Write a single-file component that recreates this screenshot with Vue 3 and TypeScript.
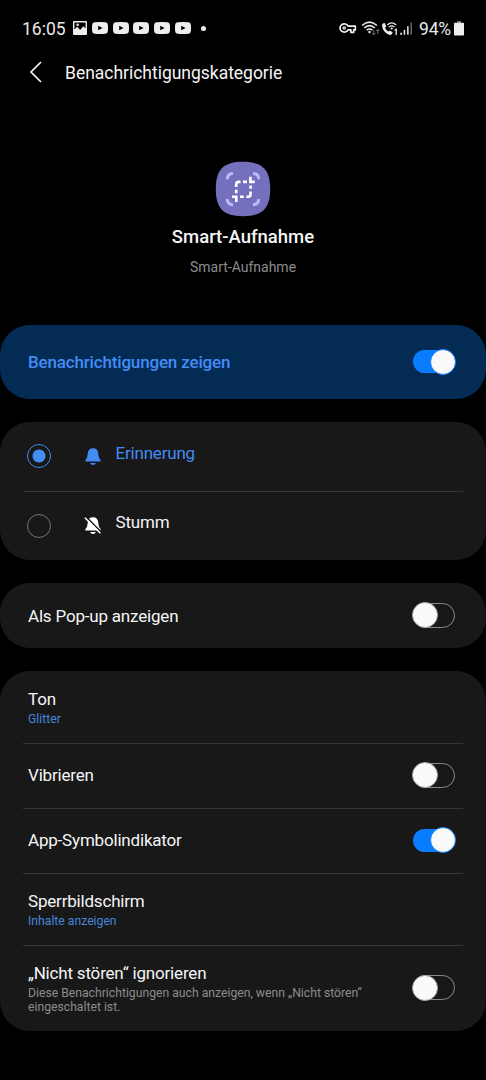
<script setup lang="ts">
import { ref } from 'vue'

interface Row {
  key: string
  title: string
  value?: string
  note?: string
  on?: boolean
}

const enabled = ref(true)
const popup = ref(false)
const mode = ref<'alert' | 'silent'>('alert')
const rows = ref<Row[]>([
  { key: 'sound', title: 'Ton', value: 'Glitter' },
  { key: 'vibrate', title: 'Vibrieren', on: false },
  { key: 'badge', title: 'App-Symbolindikator', on: true },
  { key: 'lock', title: 'Sperrbildschirm', value: 'Inhalte anzeigen' },
  {
    key: 'dnd',
    title: '„Nicht stören“ ignorieren',
    note: 'Diese Benachrichtigungen auch anzeigen, wenn „Nicht stören“ eingeschaltet ist.',
    on: false,
  },
])

function toggle(row: Row) {
  if (row.on !== undefined) row.on = !row.on
}
</script>

<template>
  <div class="screen">
    <div class="status">
      <span class="clock">16:05</span>
      <svg class="pic" viewBox="0 0 14 14">
        <path fill-rule="evenodd" d="M1 0h12a1 1 0 0 1 1 1v12a1 1 0 0 1-1 1H1a1 1 0 0 1-1-1V1a1 1 0 0 1 1-1zM1.4 1.4v7.2l2.8-2.8 3 3.1 3.2-3.7 2.2 2.2V1.4z" />
        <circle cx="4.6" cy="3.8" r="1.2" />
      </svg>
      <span class="videos">
        <svg v-for="n in 5" :key="n" class="video" viewBox="0 0 16 12">
          <path fill-rule="evenodd" d="M2.5.2Q8-.2 13.500 .2 15.700.4 15.900 3q.2 3 0 6-.2 2.600-2.400 2.800-5.500.4-11 0Q.3 11.600.1 9q-.2-3 0-6Q.3.4 2.500.2zM6.200 3.700v4.600L10.600 6z" />
        </svg>
      </span>
      <i class="more"></i>
      <svg class="system" viewBox="0 0 80 18">
        <g fill="none" stroke="#eee" stroke-width="1.700">
          <path d="M9.100 7.100H16.300V10.900H14.700V13.300H11.900V10.900H9.100A4.300 4.100 0 1 1 9.100 7.100z" stroke-linejoin="round" />
        </g>
        <circle cx="5.200" cy="9" r="1.200" fill="none" stroke="#eee" stroke-width="1.200" />
        <g fill="none" stroke="#e8e8e8" stroke-width="1.600">
          <path d="M23 6.500Q30.500-.2 38 6.500" />
          <path d="M25.300 8.900Q30.500 4.300 35.700 8.900" />
          <path d="M27.600 11.100Q30.500 8.900 33.400 11.100" />
        </g>
        <circle cx="30.500" cy="13" r="1.200" fill="#eee" />
        <g fill="none" stroke="#777" stroke-width="1">
          <path d="M34.800 11.200v4.500M33.200 14.200l1.600 1.600 1.600-1.600" />
          <path d="M38.800 15v-4.500M37.200 12l1.600-1.600 1.600 1.600" />
        </g>
        <path d="M43.300 5.100l2.100-1.300 1.900 3.500-1.300 1.400q1 2.500 3.300 3.700l1.500-1 3 2.200-1.600 2.200q-3.300.6-6.300-2.700-3.500-4-2.600-8z" fill="#eee" />
        <g fill="none" stroke="#e8e8e8" stroke-width="1.300">
          <path d="M48.300 5.900Q52.700 1.800 57.200 5.900" />
          <path d="M50 8.100Q52.700 5.700 55.400 8.100" />
        </g>
        <circle cx="52.700" cy="9.500" r="1.100" fill="#eee" />
        <path d="M55.500 11.300l1.700-.9v5.600" fill="none" stroke="#eee" stroke-width="1.300" />
        <g fill="#e8e8e8">
          <rect x="61.200" y="13.800" width="1.800" height="1.900" />
          <rect x="64.700" y="10.800" width="1.500" height="4.900" />
          <rect x="68.100" y="7.200" width="1.500" height="8.500" />
          <rect x="71.500" y="3.500" width="1.500" height="12.200" fill="#666" />
        </g>
      </svg>
      <span class="percent">94%</span>
      <svg class="battery" viewBox="0 0 10 15">
        <path d="M3 0h4v2H3z" fill="#777" />
        <path d="M.8 1.800h8.400q.8 0 .8.800v11.200q0 .8-.8.800H.8q-.8 0-.8-.8V2.600q0-.8.8-.8z" />
      </svg>
    </div>

    <header class="bar">
      <svg class="back" viewBox="0 0 14 24"><path d="M12 2 2 12l10 10" /></svg>
      <span class="heading">Benachrichtigungskategorie</span>
    </header>

    <section class="app">
      <svg class="logo" viewBox="0 0 56 56">
        <path d="M28 .8C47.500 .8 55.200 8.500 55.200 28S47.500 55.200 28 55.200 .8 47.500 .8 28 8.500 .8 28 .8z" fill="#7470bd" />
        <g fill="none" stroke="#bcbaf7" stroke-width="3">
          <path d="M12.300 18.200Q12.300 12.700 18 12.500" />
          <path d="M38 12.500Q43.700 12.700 43.700 18.200" />
          <path d="M12.300 38Q12.300 43.500 18 43.700" />
          <path d="M38 43.700Q43.700 43.500 43.700 38" />
        </g>
        <g fill="none" stroke="#fff" stroke-width="2.600">
          <path d="M21.200 26v-2.500q0-2.600 2.600-2.600H25.500M28 20.900h4M35.400 15.800v5.100h4.400M35.600 24.500v3.300M35.600 30.500v2.600q0 2.700-2.200 2.700h-2M28.800 35.800h-3.800M21.200 28.700v3.600M17 35.800h4.300V41" />
        </g>
      </svg>
      <h1 class="name">Smart-Aufnahme</h1>
      <p class="sub">Smart-Aufnahme</p>
    </section>

    <main class="cards">
      <section class="card main-switch" @click="enabled = !enabled">
        <span class="label">Benachrichtigungen zeigen</span>
        <span class="switch" :class="{ on: enabled }"><i></i></span>
      </section>

      <section class="card modes">
        <div class="mode" :class="{ active: mode === 'alert' }" @click="mode = 'alert'">
          <span class="radio"></span>
          <svg class="bell" viewBox="0 0 18 20">
            <path d="M9 1.200q5 0 5.300 5.700.2 4.200 2.300 6.100v1.600H1.400V13q2.100-1.900 2.300-6.100Q4 1.200 9 1.200zM6.200 15.900h5.600Q11.200 18 9 18t-2.800-2.100z" />
          </svg>
          <span class="mode-name">Erinnerung</span>
        </div>
        <div class="mode" :class="{ active: mode === 'silent' }" @click="mode = 'silent'">
          <span class="radio"></span>
          <svg class="bell" viewBox="0 0 18 20">
            <path d="M9 1.200q5 0 5.300 5.700.2 4.200 2.300 6.100v1.600H1.400V13q2.100-1.900 2.300-6.100Q4 1.200 9 1.200zM6.200 15.900h5.600Q11.200 18 9 18t-2.800-2.100z" />
            <path class="gap" d="M2 .8l15.500 15.500" />
            <path class="slash" d="M.9 1.700l15.500 15.500" />
          </svg>
          <span class="mode-name">Stumm</span>
        </div>
      </section>

      <section class="card popup" @click="popup = !popup">
        <span class="label">Als Pop-up anzeigen</span>
        <span class="switch" :class="{ on: popup }"><i></i></span>
      </section>

      <section class="card options">
        <div v-for="row in rows" :key="row.key" class="row" :class="row.key" @click="toggle(row)">
          <div class="texts">
            <div class="label">{{ row.title }}</div>
            <div v-if="row.value" class="value">{{ row.value }}</div>
            <div v-if="row.note" class="note">{{ row.note }}</div>
          </div>
          <span v-if="row.on !== undefined" class="switch" :class="{ on: row.on }"><i></i></span>
        </div>
      </section>
    </main>
  </div>
</template>

<style>
html,
body {
  margin: 0;
  background: #000;
}
</style>

<style scoped>
.screen {
  width: 486px;
  height: 1080px;
  overflow: hidden;
  background: #000;
  color: #f5f5f5;
  font-family: Roboto, sans-serif;
}
.screen * {
  box-sizing: border-box;
}
svg {
  display: block;
  flex: none;
}
.status {
  display: flex;
  align-items: center;
  height: 56px;
  padding: 0 22px 0 22px;
  fill: #eee;
  color: #e8e8e8;
  white-space: nowrap;
}
.clock {
  width: 51px;
  padding-top: 1px;
  font-size: 17.5px;
}
.pic {
  width: 14px;
  height: 14px;
}
.videos {
  display: flex;
  gap: 4.700px;
  margin-left: 5px;
}
.video {
  width: 16px;
  height: 12px;
}
.more {
  width: 5px;
  height: 5px;
  margin-left: 10px;
  border-radius: 50%;
  background: #eee;
}
.system {
  width: 80px;
  height: 18px;
  margin-left: auto;
}
.percent {
  width: 35px;
  padding-top: 1px;
  font-size: 17.5px;
  letter-spacing: -0.2px;
}
.battery {
  width: 10px;
  height: 15px;
}
.bar {
  display: flex;
  align-items: center;
  height: 33px;
  padding-left: 29px;
}
.back {
  width: 14px;
  height: 24px;
  margin-top: -1px;
  fill: none;
  stroke: #f5f5f5;
  stroke-width: 1.7;
}
.heading {
  margin-left: 22px;
  font-size: 17.5px;
  letter-spacing: -0.02px;
}
.app {
  display: flex;
  flex-direction: column;
  align-items: center;
  height: 236px;
  padding-top: 72px;
}
.logo {
  width: 56px;
  height: 56px;
}
.name {
  margin: 8px 0 0;
  font-size: 18.5px;
  font-weight: 500;
  line-height: 24px;
}
.sub {
  margin: 9px 0 0;
  color: #8c8c8c;
  font-size: 14px;
  line-height: 18px;
}
.cards {
  display: flex;
  flex-direction: column;
  gap: 23px;
}
.card {
  border-radius: 30px;
  background: #181818;
}
.main-switch,
.popup {
  display: flex;
  align-items: center;
  justify-content: space-between;
  padding: 0 31px 0 28px;
}
.main-switch {
  height: 74px;
  background: #032b53;
}
.main-switch .label {
  color: #438bf5;
  font-weight: 500;
  letter-spacing: -0.17px;
}
.main-switch .label,
.popup .label {
  padding-top: 2px;
}
.label {
  font-size: 17px;
  line-height: 20px;
  letter-spacing: -0.19px;
  transform: translateY(-1px);
}
.modes {
  height: 138px;
  padding: 0 23px;
}
.mode {
  display: flex;
  height: 69px;
}
.mode + .mode {
  border-top: 1px solid #363636;
}
.radio {
  width: 24px;
  height: 24px;
  margin: 22px 0 0 4px;
  border: 1.5px solid #777;
  border-radius: 50%;
}
.active .radio {
  border-color: #438bf5;
  background: radial-gradient(circle, #438bf5 6.200px, transparent 6.800px);
}
.bell {
  width: 18px;
  height: 20px;
  margin: 25px 0 0 32.500px;
  fill: #fff;
}
.mode + .mode .bell {
  margin-top: 24px;
}
.gap {
  stroke: #181818;
  stroke-width: 1.6;
}
.slash {
  stroke: #fff;
  stroke-width: 1.5;
}
.mode-name {
  margin: 21px 0 0 14px;
  font-size: 17px;
  line-height: 20px;
  letter-spacing: -0.2px;
}
.mode + .mode .mode-name {
  margin-top: 20px;
}
.active .bell {
  fill: #438bf5;
}
.active .mode-name {
  color: #438bf5;
}
.popup {
  height: 65px;
}
.options {
  height: 360px;
  padding: 0 23px;
}
.row {
  display: flex;
  align-items: center;
  justify-content: space-between;
  height: 65px;
  padding: 0 8px 0 5px;
  border-top: 1px solid #363636;
}
.row:first-child {
  border-top-color: transparent;
}
.row.sound,
.row.lock {
  height: 72px;
  padding-top: 2px;
}
.row.dnd {
  height: 86px;
}
.texts {
  width: 350px;
}
.value,
.note {
  color: #4785dc;
  font-size: 12.2px;
  line-height: 18px;
}
.note {
  padding-top: 2px;
  margin-bottom: -1px;
  color: #8c8c8c;
  line-height: 14px;
}
.switch {
  display: flex;
  align-items: center;
  flex: none;
  width: 42px;
  height: 25px;
  margin-top: -1px;
  border: 1px solid #8a8a8a;
  border-radius: 13px;
}
.row .switch {
  margin-top: -2px;
}
.switch i {
  flex: none;
  width: 26px;
  height: 26px;
  margin-left: -2px;
  border: 1px solid #a5a5a5;
  border-radius: 50%;
  background: #fafafa;
}
.switch.on {
  justify-content: flex-end;
  height: 23px;
  border: 0;
  background: #0a7cff;
}
.switch.on i {
  margin: 0 -1px 0 0;
  border-color: #0a7cff;
}
</style>
